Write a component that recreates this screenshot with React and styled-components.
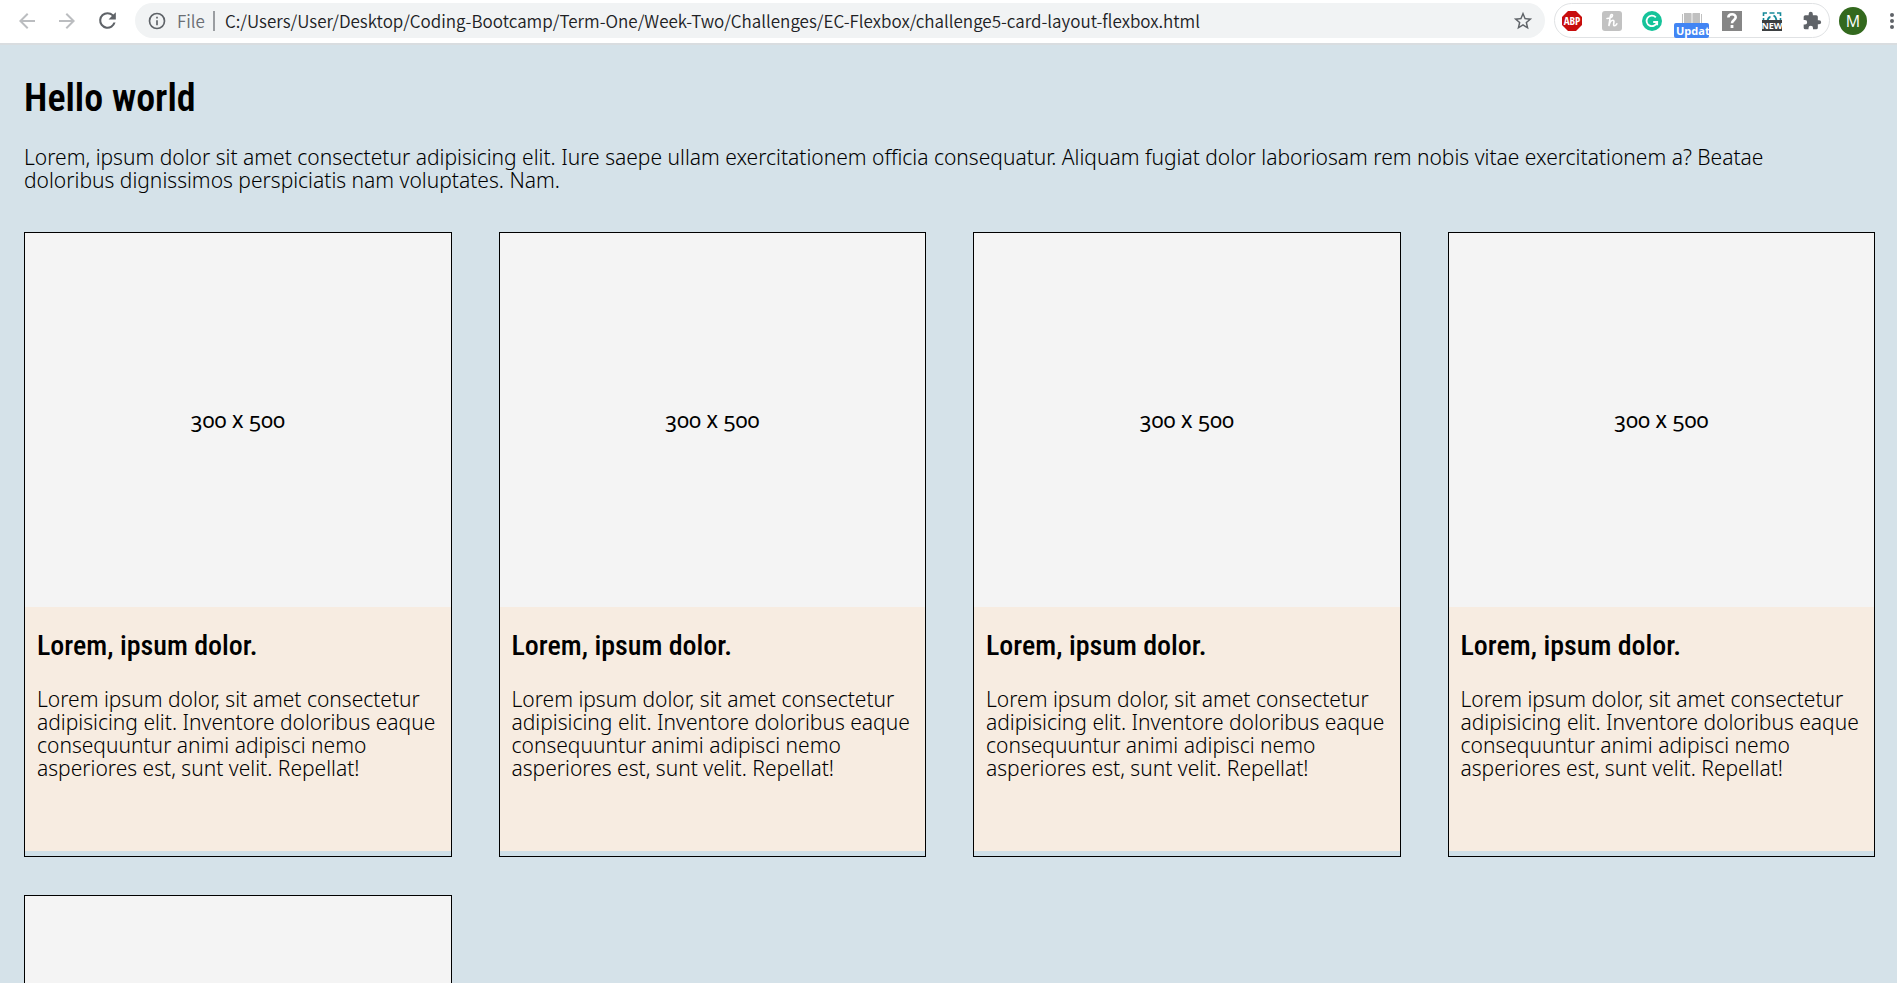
import React from "react";
import styled, { createGlobalStyle } from "styled-components";

const GlobalStyle = createGlobalStyle`
  *, *::before, *::after { box-sizing: border-box; }
  body { margin: 0; background: #d5e2e9; }
`;

const headingFont = `"Roboto Condensed", "Open Sans Condensed", Roboto, sans-serif`;
const bodyFont = `"Noto Sans", "Open Sans", sans-serif`;
const uiFont = `"Open Sans", "Noto Sans", sans-serif`;
const urlFont = `"Noto Sans CJK SC", "Noto Sans", sans-serif`;

const Shell = styled.div`
  display: flex;
  flex-direction: column;
  height: 100vh;
`;

const Toolbar = styled.header`
  display: flex;
  align-items: center;
  flex: none;
  height: 45px;
  padding: 0 0 2px 15px;
  background: #fff;
  border-bottom: 2px solid #d9dde0;
  font-family: ${uiFont};
`;

const NavGroup = styled.nav`
  display: flex;
  gap: 16px;
  margin-right: 16px;
`;

const IconButton = styled.button`
  position: relative;
  display: flex;
  align-items: center;
  justify-content: center;
  flex: none;
  width: ${(p) => p.$size || 24}px;
  height: ${(p) => p.$size || 24}px;
  padding: 0;
  border: 0;
  background: none;
  color: ${(p) => p.$color || "#5f6368"};

  svg { display: block; flex: none; }
`;

const AddressBar = styled.form`
  display: flex;
  align-items: center;
  flex: 1;
  min-width: 0;
  height: 35px;
  padding: 0 12px;
  border-radius: 18px;
  background: #f1f3f4;
`;

const Scheme = styled.label`
  display: flex;
  align-items: center;
  gap: 8px;
  margin: 0 10px;
  color: #6b6f74;
  font-family: ${urlFont};
  font-size: 17px;
  line-height: 24px;
  font-weight: 350;

  &::after {
    content: "";
    width: 2px;
    height: 20px;
    background: #9a9da1;
  }
`;

const UrlInput = styled.input`
  flex: 1;
  min-width: 0;
  height: 30px;
  padding: 0;
  border: 0;
  outline: 0;
  background: transparent;
  color: #202124;
  font-family: ${urlFont};
  font-size: 17px;
  font-weight: 350;
`;

const Extensions = styled.div`
  display: flex;
  align-items: center;
  gap: 20px;
  height: 35px;
  margin: 0 9px;
  padding: 0 7px;
  border: 1px solid #e0e2e4;
  border-radius: 18px;
`;

const UpdateTag = styled.span`
  position: absolute;
  top: 12px;
  left: -8px;
  width: 35px;
  height: 15px;
  padding-left: 2px;
  overflow: hidden;
  border-radius: 2px;
  background: #4285f4;
  color: #fff;
  font: 700 11px/15px ${uiFont};
  text-align: left;
`;

const Avatar = styled.button`
  width: 28px;
  height: 28px;
  margin-right: 20px;
  padding: 0;
  border: 0;
  border-radius: 50%;
  background: #33691e;
  color: #fff;
  font: 400 16px/28px ${uiFont};
`;

const Page = styled.main`
  flex: 1;
  min-height: 0;
  overflow-y: auto;
  scrollbar-width: none;
  padding: 30px 22px 38px 24px;
  color: #000;
  font-family: ${bodyFont};
`;

const Title = styled.h1`
  margin: 0 0 25px;
  font: 600 38px/46px ${headingFont};
`;

const Text = styled.p`
  margin: 0;
  font-size: 21px;
  line-height: 23px;
  font-weight: 300;
`;

const Intro = styled(Text)`
  padding-right: 64px;
`;

const CardGrid = styled.section`
  display: grid;
  grid-template-columns: repeat(4, minmax(0, 1fr));
  gap: 38px 47px;
  margin-top: 40px;
`;

const Card = styled.article`
  padding-bottom: 5px;
  border: 1px solid #000;
  background: #d0e0e8;
`;

const Placeholder = styled.div`
  display: flex;
  align-items: center;
  justify-content: center;
  height: 374px;
  padding-bottom: 3px;
  background: #f4f4f4;
  font-size: 22px;
  line-height: 24px;
  font-weight: 400;
  font-variant-numeric: oldstyle-nums;
  font-variant-caps: all-small-caps;
`;

const Caption = styled.div`
  min-height: 244px;
  padding: 22px 12px 24px;
  background: #f7ece1;
`;

const CardTitle = styled.h2`
  margin: 0 0 25px;
  font: 500 28px/34px ${headingFont};
`;

const Svg = ({ size = 24, box = "0 0 24 24", children }) => (
  <svg width={size} height={size} viewBox={box} fill="currentColor" aria-hidden="true">
    {children}
  </svg>
);

const AdblockIcon = () => (
  <Svg size={20} box="0 0 20 20">
    <path d="M6 0h8l6 6v8l-6 6H6l-6-6V6z" fill="#c70d0d" />
    <text x="10" y="14" textAnchor="middle" fontFamily="Open Sans Condensed, Open Sans, sans-serif" fontSize="11" fontWeight="700" fill="#fff">ABP</text>
  </Svg>
);

const HoneyIcon = () => (
  <Svg size={20} box="0 0 20 20">
    <rect width="20" height="20" rx="3" fill="#c2c2c2" />
    <path d="M5 7.500C7 7.500 10.500 6.500 10.500 4.500c0-1.500-1.800-1.200-2.200.8L6.800 15c.8-3.500 2.300-5.800 4.200-5.800 2.300 0-.6 5.600 1.300 5.600 1.100 0 1.900-.8 2.500-2" fill="none" stroke="#fff" strokeWidth="1.600" strokeLinecap="round" />
  </Svg>
);

const GrammarIcon = () => (
  <Svg size={20} box="0 0 20 20">
    <circle cx="10" cy="10" r="10" fill="#15c39a" />
    <path d="M13.800 6.300A5.300 5.300 0 1 0 15 11.200M11.200 11h4v3.300" fill="none" stroke="#fff" strokeWidth="1.800" />
  </Svg>
);

const BookIcon = () => (
  <Svg size={20} box="0 0 20 20">
    <path d="M0 3h1v10H0zM19 3h1v10h-1zM2 2h7l.6.600V13H2zM10.400 2.600L11 2h7v11h-7.600z" fill="#c0c0c0" />
  </Svg>
);

const HelpIcon = () => (
  <Svg size={20} box="0 0 20 20">
    <rect width="20" height="20" fill="#868686" />
    <path d="M6.300 6.500C6.500 2.200 13.700 2.200 13.700 6.300c0 3-3.700 2.700-3.700 6" fill="none" stroke="#fff" strokeWidth="2.600" />
    <rect x="8.600" y="14" width="2.800" height="3" fill="#fff" />
  </Svg>
);

const NewIcon = () => (
  <Svg size={20} box="0 0 20 20">
    <path d="M1.500 5V2H5M7.500 2h5M15 2h3.500v3M1.500 7v3M18.500 7v3" fill="none" stroke="#178a9a" strokeWidth="1.600" />
    <path d="M5.500 9.500Q6.500 6 8.500 6M11.500 4.500Q14 5.500 14.500 9.500" fill="none" stroke="#178a9a" strokeWidth="1.800" />
    <rect y="9" width="20" height="11" fill="#3c3f41" />
    <text x="10" y="18" textAnchor="middle" fontFamily="Open Sans, sans-serif" fontSize="9" fontWeight="700" fill="#fff">NEW</text>
  </Svg>
);

const cards = [1, 2, 3, 4, 5];

export default function App() {
  return (
    <Shell>
      <GlobalStyle />
      <Toolbar>
        <NavGroup aria-label="History">
          <IconButton $color="#bbbdc0" aria-label="Back">
            <Svg><path d="M20 11H7.830l5.590-5.590L12 4l-8 8 8 8 1.410-1.410L7.830 13H20z" /></Svg>
          </IconButton>
          <IconButton $color="#bbbdc0" aria-label="Forward">
            <Svg><path d="M4 11h12.170l-5.590-5.590L12 4l8 8-8 8-1.410-1.410L16.170 13H4z" /></Svg>
          </IconButton>
          <IconButton aria-label="Reload">
            <Svg size={25}><path d="M17.650 6.350A7.960 7.960 0 0 0 12 4a8 8 0 1 0 7.730 10h-2.080A6 6 0 1 1 12 6c1.660 0 3.140.69 4.220 1.780L13 11h7V4z" /></Svg>
          </IconButton>
        </NavGroup>
        <AddressBar onSubmit={(e) => e.preventDefault()}>
          <IconButton type="button" $size={20} aria-label="Site information">
            <Svg size={20}><path d="M11 7h2v2h-2zm0 4h2v6h-2zm1-9a10 10 0 1 0 0 20 10 10 0 0 0 0-20zm0 18a8 8 0 1 1 0-16 8 8 0 0 1 0 16z" /></Svg>
          </IconButton>
          <Scheme htmlFor="address">File</Scheme>
          <UrlInput
            id="address"
            spellCheck={false}
            defaultValue="C:/Users/User/Desktop/Coding-Bootcamp/Term-One/Week-Two/Challenges/EC-Flexbox/challenge5-card-layout-flexbox.html"
          />
          <IconButton type="button" $size={20} aria-label="Bookmark this page">
            <Svg size={22}><path d="M22 9.240l-7.190-.62L12 2 9.190 8.630 2 9.240l5.460 4.730L5.820 21 12 17.270 18.180 21l-1.630-7.030L22 9.240zM12 15.400l-3.760 2.270 1-4.280-3.320-2.880 4.380-.38L12 6.100l1.710 4.040 4.380.38-3.320 2.880 1 4.280L12 15.400z" /></Svg>
          </IconButton>
        </AddressBar>
        <Extensions>
          <IconButton $size={20} aria-label="Ad blocker"><AdblockIcon /></IconButton>
          <IconButton $size={20} aria-label="Coupons"><HoneyIcon /></IconButton>
          <IconButton $size={20} aria-label="Grammar check"><GrammarIcon /></IconButton>
          <IconButton $size={20} aria-label="Reader">
            <BookIcon />
            <UpdateTag>Updat</UpdateTag>
          </IconButton>
          <IconButton $size={20} aria-label="Help"><HelpIcon /></IconButton>
          <IconButton $size={20} aria-label="Screen capture"><NewIcon /></IconButton>
          <IconButton $size={20} aria-label="Extensions">
            <Svg size={20}><path d="M20.500 11H19V7a2 2 0 0 0-2-2h-4V3.500a2.500 2.500 0 0 0-5 0V5H4a2 2 0 0 0-1.990 2v3.800H3.500a2.700 2.700 0 0 1 0 5.400H2V20a2 2 0 0 0 2 2h3.800v-1.500a2.700 2.700 0 0 1 5.400 0V22H17a2 2 0 0 0 2-2v-4h1.500a2.500 2.500 0 0 0 0-5z" /></Svg>
          </IconButton>
        </Extensions>
        <Avatar aria-label="Profile">M</Avatar>
        <IconButton $size={10} aria-label="Menu">
          <Svg size={18} box="0 0 18 18">
            <circle cx="9" cy="3" r="2" />
            <circle cx="9" cy="9" r="2" />
            <circle cx="9" cy="15" r="2" />
          </Svg>
        </IconButton>
      </Toolbar>
      <Page>
        <Title>Hello world</Title>
        <Intro>
          Lorem, ipsum dolor sit amet consectetur adipisicing elit. Iure saepe ullam exercitationem officia consequatur.
          Aliquam fugiat dolor laboriosam rem nobis vitae exercitationem a? Beatae doloribus dignissimos perspiciatis nam
          voluptates. Nam.
        </Intro>
        <CardGrid>
          {cards.map((id) => (
            <Card key={id}>
              <Placeholder>300 X 500</Placeholder>
              <Caption>
                <CardTitle>Lorem, ipsum dolor.</CardTitle>
                <Text>
                  Lorem ipsum dolor, sit amet consectetur adipisicing elit. Inventore doloribus eaque consequuntur animi
                  adipisci nemo asperiores est, sunt velit. Repellat!
                </Text>
              </Caption>
            </Card>
          ))}
        </CardGrid>
      </Page>
    </Shell>
  );
}
